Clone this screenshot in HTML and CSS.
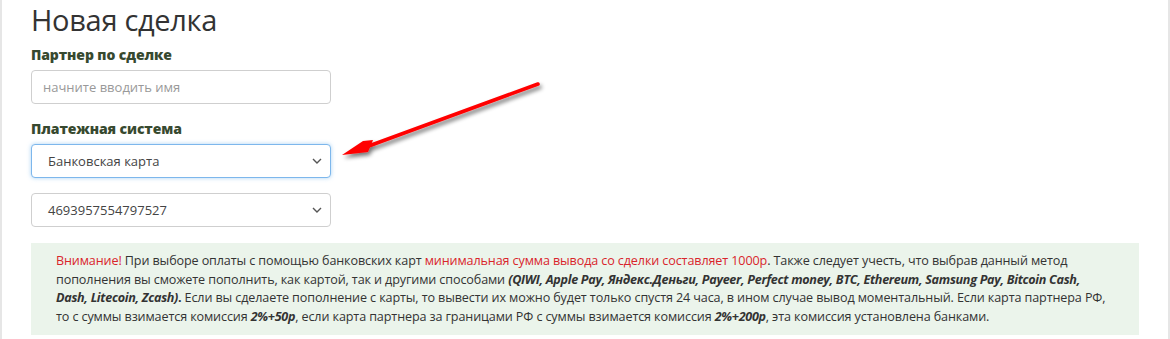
FILE: index.html
```html
<!DOCTYPE html>
<html lang="ru">
<head>
<meta charset="utf-8">
<link rel="stylesheet" href="styles.css">
</head>
<body>
<div class="panel">
  <h1 class="title">Новая сделка</h1>
  <div class="field">
    <label class="label">Партнер по сделке</label>
    <input class="control" type="text" placeholder="начните вводить имя">
  </div>
  <div class="field">
    <label class="label">Платежная система</label>
    <div class="select focus"><span>Банковская карта</span><svg class="chev" width="10" height="6" viewBox="0 0 10 6"><path d="M1 1l4 4 4-4" fill="none" stroke="#555" stroke-width="1.4"/></svg></div>
    <div class="select second"><span>4693957554797527</span><svg class="chev" width="10" height="6" viewBox="0 0 10 6"><path d="M1 1l4 4 4-4" fill="none" stroke="#555" stroke-width="1.4"/></svg></div>
  </div>
  <div class="notice">
    <span class="red">Внимание!</span> При выборе оплаты с помощью банковских карт <span class="red">минимальная сумма вывода со сделки составляет 1000р</span>. Также следует учесть, что выбрав данный метод пополнения вы сможете пополнить, как картой, так и другими способами <b><i>(QIWI, Apple Pay, Яндекс.Деньги, Payeer, Perfect money, BTC, Ethereum, Samsung Pay, Bitcoin Cash, Dash, Litecoin, Zcash)</i>.</b> Если вы сделаете пополнение с карты, то вывести их можно будет только спустя 24 часа, в ином случае вывод моментальный. Если карта партнера РФ, то с суммы взимается комиссия <b><i>2%+50р</i></b>, если карта партнера за границами РФ с суммы взимается комиссия <b><i>2%+200р</i></b>, эта комиссия установлена банками.
  </div>
  <svg class="arrow" width="220" height="100" viewBox="0 0 220 100">
    <defs>
      <filter id="sh" x="-20%" y="-40%" width="140%" height="180%">
        <feGaussianBlur in="SourceAlpha" stdDeviation="2"/>
        <feOffset dx="2" dy="3"/>
        <feComponentTransfer><feFuncA type="linear" slope="0.55"/></feComponentTransfer>
        <feMerge><feMergeNode/><feMergeNode in="SourceGraphic"/></feMerge>
      </filter>
    </defs>
    <g filter="url(#sh)">
      <line x1="197" y1="15" x2="25" y2="78" stroke="#ff0000" stroke-width="3.6" stroke-linecap="round"/>
      <path d="M1 86 L22 72 L32 71 L27 83 Z" fill="#ff0000"/>
    </g>
  </svg>
</div>
</body>
</html>
```
FILE: styles.css
```css
html, body {
  margin: 0;
  padding: 0;
  background: #fff;
}
body {
  font-family: "Open Sans", "Noto Sans", sans-serif;
  color: #333;
}
.panel {
  position: relative;
  box-sizing: border-box;
  width: 1170px;
  height: 339px;
  border-left: 2px solid #e6e6e6;
  border-right: 2px solid #e6e6e6;
  padding: 0 29px;
}
.title {
  margin: 0;
  padding-top: 1px;
  font-size: 29px;
  font-weight: 400;
  line-height: 38px;
  color: #333;
  letter-spacing: -0.3px;
}
.field {
  display: flex;
  flex-direction: column;
}
.label {
  margin-top: 6px;
  font-size: 14px;
  font-weight: 800;
  line-height: 19px;
  color: #37492f;
  letter-spacing: -0.1px;
}
.control, .select {
  box-sizing: border-box;
  width: 300px;
  height: 34px;
  margin-top: 6px;
  border: 1px solid #cfcfcf;
  border-radius: 4px;
  font-family: inherit;
  font-size: 13px;
  color: #444;
  background: #fff;
}
.control {
  padding: 0 11px;
  outline: none;
}
.control::placeholder {
  color: #999;
}
.field + .field .label {
  margin-top: 15px;
}
.select {
  display: flex;
  align-items: center;
  justify-content: space-between;
  padding: 0 8px 0 16px;
}
.select.focus {
  border-color: #7db7ec;
  box-shadow: 0 0 4px rgba(102, 175, 233, 0.55);
}
.select.second {
  margin-top: 15px;
}
.chev {
  display: block;
}
.notice {
  margin-top: 16px;
  width: 1108px;
  box-sizing: border-box;
  background: #ebf4eb;
  padding: 9px 25px 8px;
  font-size: 12.6px;
  line-height: 18.7px;
  letter-spacing: -0.12px;
  color: #333;
}
.notice b {
  font-weight: 700;
  letter-spacing: -0.3px;
}
.red {
  color: #d9252b;
}
.arrow {
  position: absolute;
  left: 339px;
  top: 69px;
}
```
